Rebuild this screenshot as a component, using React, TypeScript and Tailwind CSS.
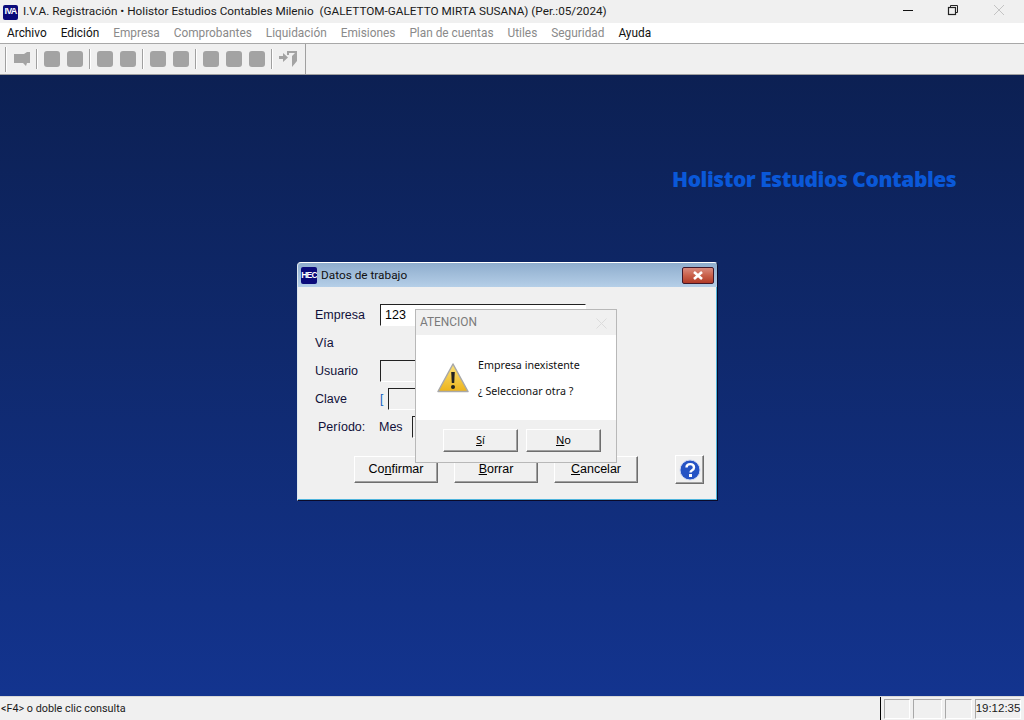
const MENU = [
  { label: "Archivo", on: true },
  { label: "Edición", on: true },
  { label: "Empresa" },
  { label: "Comprobantes" },
  { label: "Liquidación" },
  { label: "Emisiones" },
  { label: "Plan de cuentas" },
  { label: "Utiles" },
  { label: "Seguridad" },
  { label: "Ayuda", on: true },
];

function Groove({ tall }: { tall?: boolean }) {
  return (
    <div
      className={
        "w-[2px] shrink-0 border-l border-r border-l-[#a0a0a0] border-r-white " + (tall ? "h-[25px]" : "h-[20px]")
      }
    />
  );
}

function ToolSquare() {
  return <div className="h-4 w-4 shrink-0 rounded-[3px] bg-[#a3a3a3]" />;
}

function Raised({ className, children }: { className: string; children?: React.ReactNode }) {
  return (
    <div
      className={
        "flex shrink-0 items-center justify-center border border-t-white border-l-white border-r-[#6e6e6e] border-b-[#6e6e6e] bg-[#f0f0f0] shadow-[inset_-1px_-1px_0_#a0a0a0] text-black " +
        className
      }
    >
      {children}
    </div>
  );
}

function Sunken({ className, children }: { className: string; children?: React.ReactNode }) {
  return (
    <div className={"shrink-0 border border-t-[#222] border-l-[#222] border-r-white border-b-white " + className}>
      {children}
    </div>
  );
}

function Logo({ text, className }: { text: string; className: string }) {
  return (
    <div className={"flex shrink-0 items-center justify-center overflow-hidden rounded-[2px] bg-[#0b0b7a] font-bold text-white font-['Liberation_Sans',sans-serif] " + className}>
      {text}
    </div>
  );
}

function Row({ label, children, className = "" }: { label: string; children?: React.ReactNode; className?: string }) {
  return (
    <div className={"flex h-7 items-center " + className}>
      <span className="w-[65px] text-[12.5px] text-[#10103a]">{label}</span>
      {children}
    </div>
  );
}

export default function App() {
  return (
    <div className="relative flex h-[720px] w-[1024px] flex-col overflow-hidden bg-[#f0f0f0] font-['Roboto',sans-serif] text-black">
      {/* title bar */}
      <div className="flex h-[23px] items-center bg-[#f0f0f0]">
        <Logo text="IVA" className="ml-[3px] mt-[1px] h-[15px] w-[15px] text-[9px] tracking-[-0.8px]" />
        <span className="ml-[5px] mt-[1px] whitespace-pre text-[11.75px] text-[#1a1a1a]">I.V.A. Registración • Holistor Estudios Contables Milenio  (GALETTOM-GALETTO MIRTA SUSANA) (Per.:05/2024)</span>
        <div className="ml-auto flex h-full items-center">
          <svg width="144" height="23" viewBox="0 0 144 23">
            <path d="M23 10.5h10" stroke="#111" strokeWidth="1" />
            <rect x="68.5" y="7.5" width="7" height="7" fill="none" stroke="#222" strokeWidth="1.2" />
            <path d="M70.5 7.5v-2h7v7h-2" fill="none" stroke="#222" strokeWidth="1" />
            <path d="M114 5l10 10M124 5l-10 10" stroke="#c4c4c4" strokeWidth="1" />
          </svg>
        </div>
      </div>

      {/* menu */}
      <div className="flex h-[20px] items-center gap-[14px] bg-white pl-[7px] pt-[1px] text-[11.85px]">
        {MENU.map((m) => (
          <span key={m.label} className={m.on ? "text-[#111]" : "text-[#8a8a8a]"}>
            {m.label}
          </span>
        ))}
      </div>
      <div className="h-[1px] bg-[#a8a8a8]" />

      {/* toolbar */}
      <div className="flex h-[31px] border-b border-b-[#a0a0a0] bg-[#f0f0f0]">
        <div className="flex h-full w-[306px] items-center gap-[6px] border-r border-r-[#a0a0a0] pl-[5px]">
          <Groove tall />
          <svg width="16" height="16" viewBox="0 0 16 16" className="ml-[1px] shrink-0 overflow-visible">
            <path d="M0 3h10l3-2h3v11h-3l-1 3-3-3H0z" fill="#a3a3a3" />
          </svg>
          <Groove />
          <ToolSquare />
          <div className="ml-[1px]"><ToolSquare /></div>
          <Groove />
          <ToolSquare />
          <div className="ml-[1px]"><ToolSquare /></div>
          <Groove />
          <ToolSquare />
          <div className="ml-[1px]"><ToolSquare /></div>
          <Groove />
          <ToolSquare />
          <div className="ml-[1px]"><ToolSquare /></div>
          <div className="ml-[1px]"><ToolSquare /></div>
          <Groove />
          <svg width="18" height="16" viewBox="0 0 18 16" className="shrink-0">
            <path d="M0 5h4V2l5 4.5L4 11V8H0z" fill="#a3a3a3" />
            <path d="M8 0h10v10l-5 6V5l3-3H10v2H8z" fill="#a3a3a3" />
          </svg>
        </div>
      </div>

      {/* desktop */}
      <div className="relative flex-1 bg-gradient-to-b from-[#0c2053] to-[#13348f]">
        <div className="absolute left-[672px] top-[89px] text-[21px] font-extrabold tracking-[-0.45px] text-[#0a58d8] font-['Open_Sans',sans-serif]">
          Holistor Estudios Contables
        </div>
      </div>

      {/* status bar */}
      <div className="flex h-[24px] items-center border-t border-t-[#d8d8d8] bg-[#f0f0f0] text-[10.8px] text-[#1a1a1a]">
        <span className="ml-[1px] flex-1 pt-[2px]">&lt;F4&gt; o doble clic consulta</span>
        <div className="h-full w-[1px] bg-black" />
        <div className="ml-[3px] h-[20px] w-[26px] border border-t-[#a8a8a8] border-l-[#a8a8a8] border-r-white border-b-white" />
        <div className="ml-[3px] h-[20px] w-[29px] border border-t-[#a8a8a8] border-l-[#a8a8a8] border-r-white border-b-white" />
        <div className="ml-[3px] h-[20px] w-[27px] border border-t-[#a8a8a8] border-l-[#a8a8a8] border-r-white border-b-white" />
        <div className="ml-[3px] mr-[3px] flex h-[20px] w-[46px] items-center justify-center border border-t-[#a8a8a8] border-l-[#a8a8a8] border-r-white border-b-white font-['Liberation_Sans',sans-serif] text-[11.5px]">
          19:12:35
        </div>
      </div>

      {/* Datos de trabajo window */}
      <div className="absolute left-[297px] top-[262px] flex h-[239px] w-[421px] flex-col rounded-t-[4px] border border-t-white border-l-[#dfe8ee] border-r-[#0a0a2a] border-b-[#0a0a2a] bg-[#f0f0f0] shadow-[inset_-1px_-1px_0_#4fb4dc] font-['Liberation_Sans',sans-serif]">
        <div className="flex h-[24px] items-center rounded-t-[3px] bg-gradient-to-b from-[#8fadcd] to-[#b5cfe8] px-[3px]">
          <Logo text="HEC" className="h-[17px] w-[16px] text-[8.5px] tracking-[-0.8px]" />
          <span className="ml-[4px] mt-[2px] font-['Roboto',sans-serif] text-[11.8px] text-[#111]">Datos de trabajo</span>
          <div className="ml-auto flex h-[17px] w-[32px] items-center justify-center rounded-[2px] border border-[#40182a] bg-gradient-to-b from-[#d98a7e] via-[#c9604a] to-[#b03a28]">
            <svg width="14" height="11" viewBox="0 0 14 11">
              <path d="M3 2l8 7M11 2l-8 7" stroke="#fff" strokeWidth="2.6" />
            </svg>
          </div>
        </div>

        <div className="flex flex-col pl-[17px] pt-[14px]">
          <Row label="Empresa">
            <Sunken className="flex h-[22px] w-[206px] items-center bg-white pl-[4px] text-[12.5px]">123</Sunken>
          </Row>
          <Row label="Vía" />
          <Row label="Usuario">
            <Sunken className="h-[22px] w-[60px]" />
          </Row>
          <Row label="Clave">
            <span className="w-[8px] text-[12px] text-[#0b5fc0]">[</span>
            <Sunken className="h-[22px] w-[60px]" />
          </Row>
          <Row label="Período:" className="pl-[3px]">
            <span className="-ml-[4px] w-[33px] text-[12.5px] text-[#10103a]">Mes</span>
            <Sunken className="h-[22px] w-[30px]" />
          </Row>
          <div className="mt-[14px] flex items-center pl-[39px] text-[12.5px]">
            <Raised className="h-[27px] w-[84px]"><span>Co<u>n</u>firmar</span></Raised>
            <Raised className="ml-[16px] h-[27px] w-[84px]"><span><u>B</u>orrar</span></Raised>
            <Raised className="ml-[16px] h-[27px] w-[84px]"><span><u>C</u>ancelar</span></Raised>
            <Raised className="ml-[37px] h-[29px] w-[29px]">
              <svg width="22" height="22" viewBox="0 0 22 22">
                <circle cx="11" cy="11" r="10" fill="#2553c4" stroke="#cfd8f2" strokeWidth="1" />
                <path d="M7.5 8.5c0-4.5 7.5-4.5 7.5 0 0 3-3.5 2.5-3.5 5" fill="none" stroke="#fff" strokeWidth="2.4" />
                <rect x="10" y="15" width="3" height="3" fill="#fff" />
              </svg>
            </Raised>
          </div>
        </div>
      </div>

      {/* ATENCION alert */}
      <div className="absolute left-[415px] top-[309px] flex h-[154px] w-[202px] flex-col border border-[#b8b8b8] bg-[#f0f0f0] font-['Noto_Sans',sans-serif]">
        <div className="flex h-[25px] items-center justify-between pl-[4px] pr-[9px] pt-[1px] font-['Roboto',sans-serif] text-[11.9px] text-[#7a7a7a]">
          <span>ATENCION</span>
          <svg width="11" height="11" viewBox="0 0 11 11">
            <path d="M0.5 0.5l10 10M10.5 0.5l-10 10" stroke="#dcdcdc" strokeWidth="1" />
          </svg>
        </div>
        <div className="flex h-[85px] items-center bg-white pl-[21px]">
          <svg width="32" height="30" viewBox="0 0 32 30">
            <defs>
              <linearGradient id="warn" x1="0" y1="0" x2="0" y2="1">
                <stop offset="0" stopColor="#fbe27a" />
                <stop offset="1" stopColor="#edb31a" />
              </linearGradient>
            </defs>
            <path d="M16 1L31 28.5H1z" fill="url(#warn)" stroke="#a8a8a8" strokeWidth="1.5" strokeLinejoin="round" />
            <path d="M14.2 9h3.6l-.6 11h-2.4z" fill="#222" />
            <circle cx="16" cy="24" r="2" fill="#222" />
          </svg>
          <div className="ml-[9px] flex flex-col gap-[12px] text-[10.7px] leading-[14px] text-[#111]">
            <span>Empresa inexistente</span>
            <span>¿ Seleccionar otra ?</span>
          </div>
        </div>
        <div className="flex flex-1 gap-[8px] pl-[27px] pt-[9px] text-[11px]">
          <Raised className="h-[23px] w-[75px]"><span><u>S</u>í</span></Raised>
          <Raised className="h-[23px] w-[75px]"><span><u>N</u>o</span></Raised>
        </div>
      </div>
    </div>
  );
}
